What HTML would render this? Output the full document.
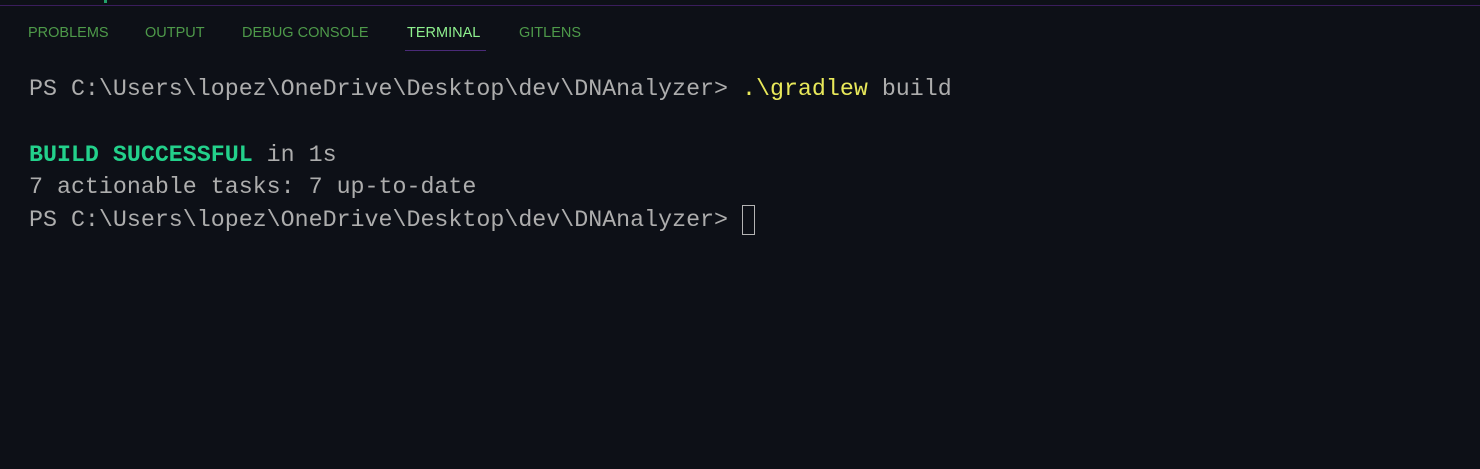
<!DOCTYPE html>
<html><head><style>
html,body{margin:0;padding:0;background:#0d1017;width:1480px;height:469px;overflow:hidden;position:relative}
.topline{position:absolute;left:0;top:5px;width:1480px;height:1px;background:#3a1d5c}
.tab{position:absolute;top:25px;font-family:"Liberation Sans",sans-serif;font-size:14.5px;color:#4e9a4a}
.ul{position:absolute;left:405px;top:50px;width:81px;height:1px;background:#4a2a78}
.t{position:absolute;left:29px;font-family:"Liberation Mono",monospace;font-size:23.3px;color:#adadad;white-space:pre;line-height:32px}
.y{color:#e8e85a}.g{color:#23d18b;font-weight:bold}
.cur{position:absolute;left:742px;top:205px;width:13px;height:30px;border:1px solid #b4b4b4;box-sizing:border-box}
</style></head><body>
<div class="topline"></div>
<div style="position:absolute;left:104px;top:0;width:3px;height:3px;background:#23a06b"></div>
<div class="tab" style="left:28px">PROBLEMS</div>
<div class="tab" style="left:145px">OUTPUT</div>
<div class="tab" style="left:242px">DEBUG CONSOLE</div>
<div class="tab" style="left:407px;color:#8ef08e">TERMINAL</div>
<div class="tab" style="left:519px">GITLENS</div>
<div class="ul"></div>
<div class="t" style="top:73px">PS C:\Users\lopez\OneDrive\Desktop\dev\DNAnalyzer&gt; <span class="y">.\gradlew</span> build</div>
<div class="t" style="top:139px"><span class="g">BUILD SUCCESSFUL</span> in 1s</div>
<div class="t" style="top:171px">7 actionable tasks: 7 up-to-date</div>
<div class="t" style="top:204px">PS C:\Users\lopez\OneDrive\Desktop\dev\DNAnalyzer&gt; </div>
<div class="cur"></div>
</body></html>
